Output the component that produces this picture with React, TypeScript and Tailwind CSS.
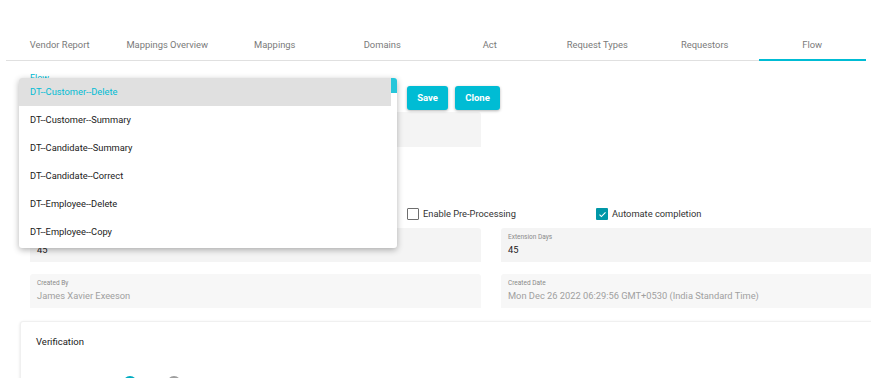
import React from "react";

const tabs = [
  "Vendor Report",
  "Mappings Overview",
  "Mappings",
  "Domains",
  "Act",
  "Request Types",
  "Requestors",
  "Flow",
];

const options = [
  "DT--Customer--Delete",
  "DT--Customer--Summary",
  "DT--Candidate--Summary",
  "DT--Candidate--Correct",
  "DT--Employee--Delete",
  "DT--Employee--Copy",
];

function Box({ label, value, disabled }: { label: string; value: string; disabled?: boolean }) {
  return (
    <div className={"h-[34px] rounded-t-[3px] pl-[7px] pt-[5px] " + (disabled ? "bg-[#f7f7f7]" : "bg-[#f4f4f4]")}>
      <div className="text-[6.5px] leading-[8px] text-[#8a8a8a]">{label}</div>
      <div className={"text-[9.3px] leading-[14px] mt-[2px] " + (disabled ? "text-[#a0a0a0]" : "text-[#212121]")}>{value}</div>
    </div>
  );
}

function Check({ label, checked }: { label: string; checked?: boolean }) {
  return (
    <div className="flex items-center gap-[4px] h-[16px] -ml-[1px]">
      {checked ? (
        <div className="w-[12px] h-[12px] rounded-[1px] bg-[#0097a7] flex items-center justify-center">
          <svg width="9" height="9" viewBox="0 0 24 24" fill="none" stroke="white" strokeWidth="3">
            <path d="M4 12.5l5 5L20 6.5" />
          </svg>
        </div>
      ) : (
        <div className="w-[12px] h-[12px] rounded-[1px] border border-[#6e6e6e] bg-white" />
      )}
      <span className="text-[9.3px] text-[#333]">{label}</span>
    </div>
  );
}

export default function App() {
  return (
    <div className="relative w-[871px] h-[378px] overflow-hidden bg-white" style={{ fontFamily: "Roboto, 'Liberation Sans', sans-serif" }}>
      {/* Tabs */}
      <div className="pt-[30px] px-[6px]">
        <div className="flex w-[860px] border-b border-[#e0e0e0]">
          {tabs.map((t) => (
            <div key={t} className="flex-1 h-[30px] relative flex items-center justify-center text-[9.4px] text-[#7a7a7a]">
              {t}
              {t === "Flow" && <div className="absolute left-0 right-0 bottom-[-1px] h-[2px] bg-[#00bcd4]" />}
            </div>
          ))}
        </div>
      </div>

      {/* Form */}
      <div className="pl-[30px]">
        <div className="flex items-start h-[44px] mt-[5px]">
          <div className="w-[367px] pt-[7px]">
            <div className="text-[9px] leading-[10px] text-[#00bcd4]">Flow</div>
            <div className="text-[9.3px] leading-[14px] mt-[2px] text-[#212121]">DT--Customer--Delete</div>
            <div className="h-[2px] bg-[#00bcd4] mt-[2px]" />
          </div>
          <div className="flex gap-[7px] ml-[10px] mt-[20px]">
            <button className="h-[24px] w-[41px] rounded-[3px] bg-[#00bcd4] text-white text-[9.5px] font-bold shadow-[0_1px_3px_rgba(0,0,0,0.3)]">Save</button>
            <button className="h-[24px] w-[45px] rounded-[3px] bg-[#00bcd4] text-white text-[9.5px] font-bold shadow-[0_1px_3px_rgba(0,0,0,0.3)]">Clone</button>
          </div>
        </div>

        <div className="mt-[2px] w-[451px] h-[35px] bg-[#f4f4f4] rounded-t-[3px]" />

        <div className="mt-[59px] h-[15px] grid grid-cols-[189px_189px_189px_189px]">
          <div />
          <div />
          <Check label="Enable Pre-Processing" />
          <Check label="Automate completion" checked />
        </div>

        <div className="mt-[7px] grid grid-cols-[451px_390px] gap-x-[20px] gap-y-[12px]">
          <Box label="Due Days" value="45" />
          <Box label="Extension Days" value="45" />
          <Box label="Created By" value="James Xavier Exeeson" disabled />
          <Box label="Created Date" value="Mon Dec 26 2022 06:29:56 GMT+0530 (India Standard Time)" disabled />
        </div>

        <div className="mt-[13px] -ml-[10px] w-[870px] h-[80px] bg-white rounded-[3px] border border-[#f0f0f0] shadow-[0_1px_3px_rgba(0,0,0,0.12)] pl-[15px] pt-[13px]">
          <div className="text-[9.5px] text-[#212121]">Verification</div>
          <div className="flex gap-[30px] mt-[27px] ml-[87px]">
            <div className="w-[14px] h-[14px] rounded-full border-2 border-[#00acc1]" />
            <div className="w-[14px] h-[14px] rounded-full border-2 border-[#9e9e9e]" />
          </div>
        </div>
      </div>

      {/* Dropdown menu overlay */}
      <div className="absolute left-[19px] top-[78px] w-[378px] h-[170px] bg-white rounded-[3px] shadow-[0_2px_6px_rgba(0,0,0,0.3)] overflow-hidden">
        <div className="w-[372px]">
          {options.map((o, i) => (
            <div
              key={o}
              className={
                "h-[28px] flex items-center pl-[11px] text-[9.3px] " +
                (i === 0 ? "bg-[#e0e0e0] text-[#00bcd4]" : "text-[#212121]")
              }
            >
              {o}
            </div>
          ))}
        </div>
        <div className="absolute right-0 top-0 w-[6px] h-[15px] bg-[#26c6da]" />
      </div>
    </div>
  );
}
